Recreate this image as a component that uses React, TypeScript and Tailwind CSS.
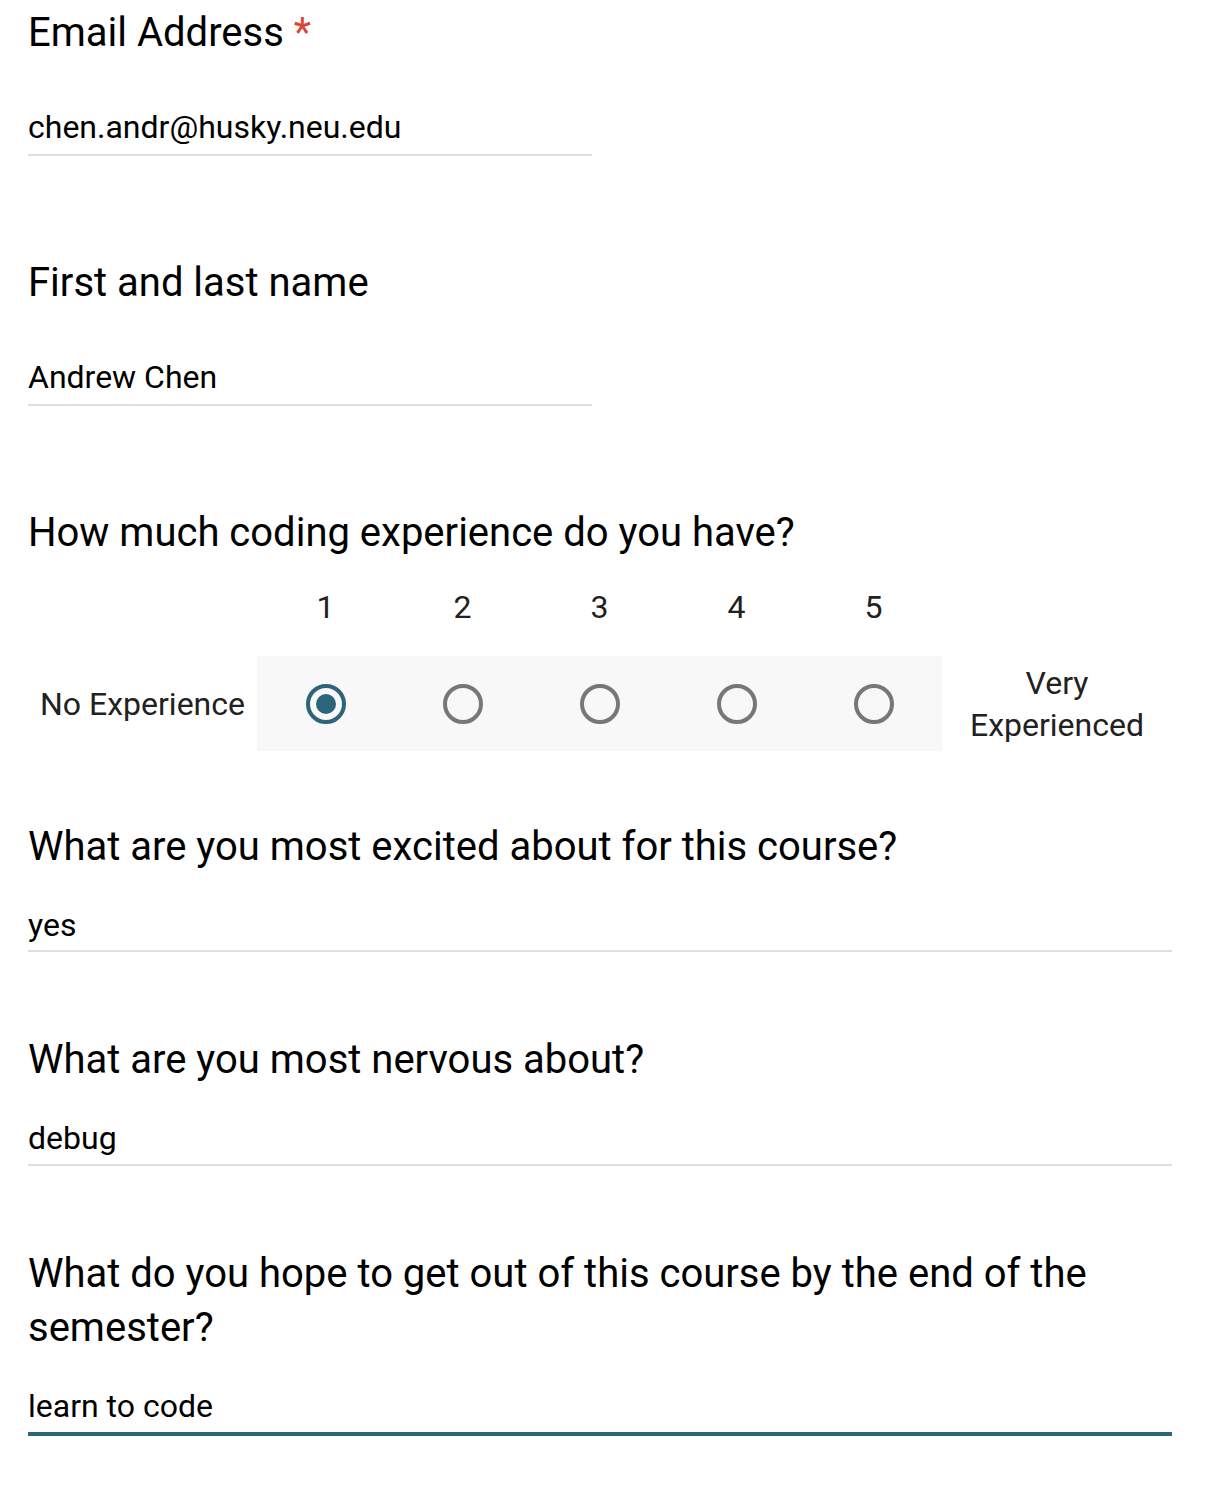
import React from 'react';

// read-only form response, drawn at 2x scale
const TEAL = 'border-[#2c6479]';

const Radio = ({ checked }: { checked?: boolean }) => (
  <div
    className={`w-[40px] h-[40px] rounded-full border-[4px] flex items-center justify-center ${
      checked ? TEAL : 'border-[#777777]'
    }`}
  >
    {checked && <div className="w-[20px] h-[20px] rounded-full bg-[#2c6479]" />}
  </div>
);

const Answer = ({ value, wide, focused, pad }: { value: string; wide?: boolean; focused?: boolean; pad: string }) => (
  <div
    className={`${wide ? 'w-full' : 'w-[564px]'} ${pad} text-[32px] leading-[40px] text-black ${
      focused ? 'border-b-[4px] border-[#2c6479]' : 'border-b-2 border-[#e0e0e0]'
    }`}
  >
    {value}
  </div>
);

export default function App() {
  return (
    <div className="min-h-screen bg-white w-[1214px] pl-[28px] pr-[42px] pt-[6px] font-['Roboto',sans-serif]">
      {/* email */}
      <div className="text-[40px] leading-[54px] text-black">
        Email Address<span className="ml-[10px] text-[#db4437]">*</span>
      </div>
      <div className="mt-[47px]">
        <Answer value="chen.andr@husky.neu.edu" pad="pb-[7px]" />
      </div>

      {/* name */}
      <div className="mt-[100px] text-[40px] leading-[54px] text-black">First and last name</div>
      <div className="mt-[47px]">
        <Answer value="Andrew Chen" pad="pb-[7px]" />
      </div>

      {/* linear scale */}
      <div className="mt-[100px] text-[40px] leading-[54px] text-black">How much coding experience do you have?</div>
      <div className="mt-[27px] flex text-[32px] leading-[40px] text-[#212121]">
        <div className="w-[229px]" />
        {[1, 2, 3, 4, 5].map((n) => (
          <div key={n} className="w-[137px] text-center">
            {n}
          </div>
        ))}
      </div>
      <div className="mt-[29px] flex items-center text-[32px] leading-[42px] text-[#212121]">
        <div className="w-[229px] text-center">No Experience</div>
        <div className="flex h-[95px] bg-[#f8f8f8]">
          {[1, 2, 3, 4, 5].map((n) => (
            <div key={n} className="w-[137px] flex items-center justify-center">
              <Radio checked={n === 1} />
            </div>
          ))}
        </div>
        <div className="flex-1 text-center">
          Very
          <br />
          Experienced
        </div>
      </div>

      <div className="mt-[69px] text-[40px] leading-[54px] text-black">What are you most excited about for this course?</div>
      <div className="mt-[31px]">
        <Answer value="yes" wide pad="pb-[5px]" />
      </div>

      <div className="mt-[81px] text-[40px] leading-[54px] text-black">What are you most nervous about?</div>
      <div className="mt-[31px]">
        <Answer value="debug" wide pad="pb-[6px]" />
      </div>

      <div className="mt-[81px] text-[40px] leading-[54px] text-black">
        What do you hope to get out of this course by the end of the semester?
      </div>
      <div className="mt-[31px]">
        <Answer value="learn to code" wide focused pad="pb-[6px]" />
      </div>
    </div>
  );
}
